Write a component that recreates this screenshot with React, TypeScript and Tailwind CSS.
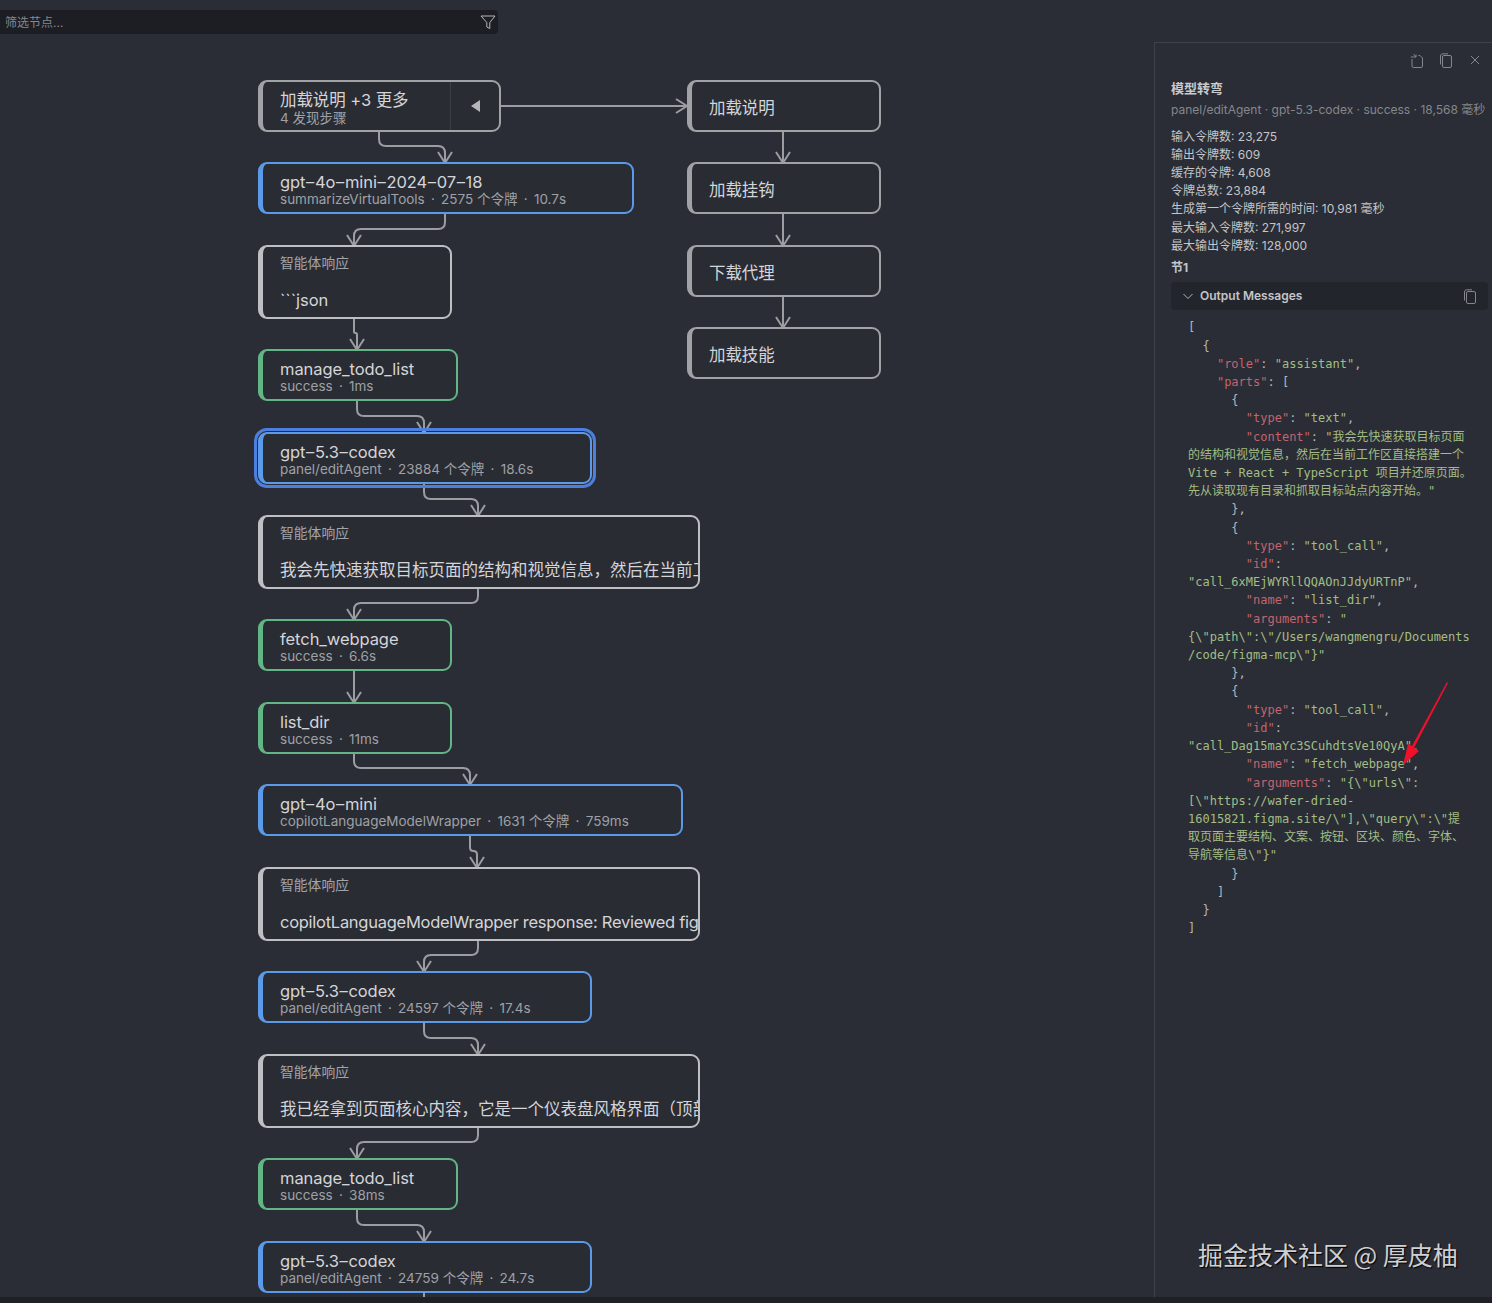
import React from "react";

const SANS = "font-['Inter','Noto_Sans_CJK_SC',sans-serif]";
const SEP = " \u2009·\u2009 ";

type Kind = "gray" | "blue" | "green" | "resp" | "active";
type N = { x: number; y: number; w: number; h: number; kind: Kind; title: string; sub?: string; head?: string; collapse?: boolean; tight?: boolean };

const nodes: N[] = [
  { x: 258, y: 81, w: 242, h: 50, kind: "gray", title: "加载说明 +3 更多", sub: "4 发现步骤", collapse: true },
  { x: 258, y: 163, w: 375, h: 51, kind: "blue", title: "gpt–4o–mini–2024–07–18", sub: `summarizeVirtualTools${SEP}2575 个令牌${SEP}10.7s` },
  { x: 258, y: 246, w: 193, h: 72, kind: "resp", head: "智能体响应", title: "```json" },
  { x: 258, y: 350, w: 199, h: 51, kind: "green", title: "manage_todo_list", sub: `success${SEP}1ms` },
  { x: 258, y: 433, w: 333, h: 51, kind: "active", title: "gpt–5.3–codex", sub: `panel/editAgent${SEP}23884 个令牌${SEP}18.6s` },
  { x: 258, y: 516, w: 441, h: 72, kind: "resp", head: "智能体响应", title: "我会先快速获取目标页面的结构和视觉信息，然后在当前工作区直接搭建一个" },
  { x: 258, y: 620, w: 193, h: 50, kind: "green", title: "fetch_webpage", sub: `success${SEP}6.6s` },
  { x: 258, y: 703, w: 193, h: 50, kind: "green", title: "list_dir", sub: `success${SEP}11ms` },
  { x: 258, y: 785, w: 424, h: 51, kind: "blue", title: "gpt–4o–mini", sub: `copilotLanguageModelWrapper${SEP}1631 个令牌${SEP}759ms` },
  { x: 258, y: 868, w: 441, h: 72, kind: "resp", head: "智能体响应", title: "copilotLanguageModelWrapper response: Reviewed figma", tight: true },
  { x: 258, y: 972, w: 333, h: 51, kind: "blue", title: "gpt–5.3–codex", sub: `panel/editAgent${SEP}24597 个令牌${SEP}17.4s` },
  { x: 258, y: 1055, w: 441, h: 72, kind: "resp", head: "智能体响应", title: "我已经拿到页面核心内容，它是一个仪表盘风格界面（顶部导航" },
  { x: 258, y: 1159, w: 199, h: 51, kind: "green", title: "manage_todo_list", sub: `success${SEP}38ms` },
  { x: 258, y: 1242, w: 333, h: 51, kind: "blue", title: "gpt–5.3–codex", sub: `panel/editAgent${SEP}24759 个令牌${SEP}24.7s` },
  { x: 687, y: 81, w: 193, h: 50, kind: "gray", title: "加载说明" },
  { x: 687, y: 163, w: 193, h: 51, kind: "gray", title: "加载挂钩" },
  { x: 687, y: 246, w: 193, h: 50, kind: "gray", title: "下载代理" },
  { x: 687, y: 328, w: 193, h: 51, kind: "gray", title: "加载技能" },
];

const kindClass: Record<Kind, string> = {
  gray: "border-[#a0a2a6]",
  blue: "border-[#5b9ae8]",
  green: "border-[#62b585]",
  resp: "border-[#bdbfc3]",
  active: "border-[#5b9ae8] outline-[3px] outline-offset-1 outline-[#4c7fe0]",
};

function edgePath(x1: number, y1: number, x2: number, y2: number) {
  if (x1 === x2) return `M${x1} ${y1}V${y2}`;
  const d = x2 > x1 ? 1 : -1;
  const r = Math.min(7, Math.abs(x2 - x1) / 2);
  const m = y1 + 15;
  return `M${x1} ${y1}V${m - r}Q${x1} ${m} ${x1 + d * r} ${m}H${x2 - d * r}Q${x2} ${m} ${x2} ${m + r}V${y2}`;
}

const edges: [number, number, number, number][] = [
  [379, 131, 445, 163],
  [445, 214, 354, 246],
  [354, 318, 357, 350],
  [357, 401, 424, 433],
  [424, 484, 478, 516],
  [478, 588, 354, 620],
  [354, 670, 354, 703],
  [354, 753, 470, 785],
  [470, 836, 477, 868],
  [478, 940, 424, 972],
  [424, 1023, 478, 1055],
  [478, 1127, 357, 1159],
  [357, 1210, 424, 1242],
  [783, 131, 783, 163],
  [783, 214, 783, 246],
  [783, 296, 783, 328],
];

function Edges() {
  return (
    <svg className="absolute left-0 top-0 pointer-events-none" width="1150" height="1297" fill="none" stroke="#9b9da1" strokeWidth="2">
      {edges.map(([a, b, c, d], i) => (
        <g key={i}>
          <path d={edgePath(a, b, c, d)} />
          <path d={`M${c - 7} ${d - 11}L${c} ${d}L${c + 7} ${d - 11}`} />
        </g>
      ))}
      <path d="M500 106H687M676 99L687 106L676 113" />
      <path d="M424 1293V1297" />
    </svg>
  );
}

function Title({ text }: { text: string }) {
  const parts = text.split("–");
  return (
    <>
      {parts.map((p, i) => (
        <React.Fragment key={i}>
          {i > 0 && <span className="px-[0.7px]">–</span>}
          {p}
        </React.Fragment>
      ))}
    </>
  );
}

function Node({ n }: { n: N }) {
  return (
    <div
      className={`absolute box-border rounded-[9px] border-2 border-l-[5px] bg-[#2a2c34] ${kindClass[n.kind]} ${SANS}`}
      style={{ left: n.x, top: n.y - 1, width: n.w + 1, height: n.h === 51 ? 52 : n.h + 2 }}
    >
      <div className="flex h-full overflow-hidden rounded-md">
        {n.head ? (
          <div className="pl-[17px] pt-[7px] whitespace-nowrap overflow-hidden">
            <div className="text-[13.8px] leading-[18px] text-[#a2a4a8]">{n.head}</div>
            <div className={`mt-[17px] text-[16.5px] leading-[22px] text-[#d4d5d8] ${n.tight ? "tracking-[-0.27px]" : ""}`}>{n.title}</div>
          </div>
        ) : (
          <div className={`flex-1 pl-[17px] flex flex-col justify-center whitespace-pre ${n.sub ? "pt-[4px]" : "pt-[3px]"}`}>
            <div className="text-[16.5px] leading-[18px] tracking-[-0.07px] text-[#d4d5d8]"><Title text={n.title} /></div>
            {n.sub && <div className={`text-[13.5px] leading-[16px] text-[#9fa1a5] ${n.collapse ? "mt-[1px]" : ""}`}>{n.sub}</div>}
          </div>
        )}
        {n.collapse && (
          <div className="w-[49px] border-l border-[#3c3e46] flex items-center justify-center">
            <div className="w-0 h-0 border-y-[6px] border-y-transparent border-r-[9px] border-r-[#b4b6ba]" />
          </div>
        )}
      </div>
    </div>
  );
}

const K = ({ children }: { children: React.ReactNode }) => <span className="text-[#c3646f]">{children}</span>;
const S = ({ children }: { children: React.ReactNode }) => <span className="text-[#a3bd85]">{children}</span>;

function Json() {
  return (
    <pre className="mt-[8px] ml-[17px] font-['DejaVu_Sans_Mono','Noto_Sans_CJK_SC',monospace] text-[12px] leading-[18.2px] text-[#b4b6ba]">
      {"[\n  {\n    "}<K>"role"</K>{": "}<S>"assistant"</S>{",\n    "}<K>"parts"</K>{": [\n      {\n        "}
      <K>"type"</K>{": "}<S>"text"</S>{",\n        "}<K>"content"</K>{": "}
      <S>{'"我会先快速获取目标页面\n的结构和视觉信息，然后在当前工作区直接搭建一个\nVite + React + TypeScript 项目并还原页面。\n先从读取现有目录和抓取目标站点内容开始。"'}</S>
      {"\n      },\n      {\n        "}
      <K>"type"</K>{": "}<S>"tool_call"</S>{",\n        "}<K>"id"</K>{":\n"}<S>"call_6xMEjWYRllQQAOnJJdyURTnP"</S>{",\n        "}
      <K>"name"</K>{": "}<S>"list_dir"</S>{",\n        "}<K>"arguments"</K>{": "}
      <S>{'"\n{\\"path\\":\\"/Users/wangmengru/Documents\n/code/figma-mcp\\"}"'}</S>
      {"\n      },\n      {\n        "}
      <K>"type"</K>{": "}<S>"tool_call"</S>{",\n        "}<K>"id"</K>{":\n"}<S>"call_Dag15maYc3SCuhdtsVe10QyA"</S>{",\n        "}
      <K>"name"</K>{": "}<S>"fetch_webpage"</S>{",\n        "}<K>"arguments"</K>{": "}
      <S>{'"{\\"urls\\":\n[\\"https://wafer-dried-\n16015821.figma.site/\\"],\\"query\\":\\"提\n取页面主要结构、文案、按钮、区块、颜色、字体、\n导航等信息\\"}"'}</S>
      {"\n      }\n    ]\n  }\n]"}
    </pre>
  );
}

const CopyIcon = () => (
  <svg width="14" height="15" viewBox="0 0 14 15" fill="none" stroke="#85878c" strokeWidth="1">
    <rect x="3.5" y="2.5" width="9" height="12" rx="1.5" />
    <path d="M1.5 11.5V3Q1.5 1 3.5 .8H9" />
  </svg>
);

const stats = [
  "输入令牌数: 23,275",
  "输出令牌数: 609",
  "缓存的令牌: 4,608",
  "令牌总数: 23,884",
  "生成第一个令牌所需的时间: 10,981 毫秒",
  "最大输入令牌数: 271,997",
  "最大输出令牌数: 128,000",
];

export default function App() {
  return (
    <div className={`relative w-[1492px] h-[1303px] overflow-hidden bg-[#2a2d35] ${SANS}`}>
      <div className="flex h-[1297px]">
        <main className="relative flex-1">
          <div className="flex h-6 w-[498px] mt-[10px] items-center justify-between rounded-r bg-[#1c1e24] pl-[5px] pr-[1px]">
            <span className="mt-[2px] text-[12px] text-[#85878c]">筛选节点...</span>
            <svg width="16" height="16" viewBox="0 0 16 16" fill="none" stroke="#b4b6ba" strokeWidth="1" className="mr-[1px]">
              <path d="M1 2H15L9.8 8.5V14.5L6.8 13V8.5Z" strokeLinejoin="round" />
            </svg>
          </div>
          <Edges />
          {nodes.map((n, i) => (
            <Node key={i} n={n} />
          ))}
        </main>
        <aside className="mt-[42px] box-border w-[338px] shrink-0 border-l border-t border-[#3e4149] pl-4 pr-[4px]">
          <div className="flex h-[37px] items-center justify-end gap-[15px] pr-[6px] pb-[3px]">
            <svg width="14" height="15" viewBox="0 0 14 15" fill="none" stroke="#85878c" strokeWidth="1">
              <path d="M2 6V13Q2 14.5 3.5 14.5H11Q12.5 14.5 12.5 13V5L10 2.5H8.5" />
              <path d="M.8 4H6M6 4V1.5M6 4L3.5 1.2" />
            </svg>
            <CopyIcon />
            <svg width="14" height="14" viewBox="0 0 14 14" fill="none" stroke="#85878c" strokeWidth="1">
              <path d="M3 3L11 11M11 3L3 11" />
            </svg>
          </div>
          <div className="-mt-[1px] text-[13px] leading-[18px] font-bold text-[#c9cacd]">模型转弯</div>
          <div className="mt-[4px] whitespace-nowrap text-[12px] leading-[18px] text-[#85878c]">
            panel/editAgent · gpt-5.3-codex · success · 18,568 毫秒
          </div>
          <div className="mt-[8.5px] text-[12px] leading-[18.2px] text-[#c4c5c8]">
            {stats.map((s) => (
              <div key={s}>{s}</div>
            ))}
          </div>
          <div className="mt-[4.5px] text-[12px] leading-[18px] font-bold text-[#c4c5c8]">节1</div>
          <div className="mt-[5px] flex h-[28px] items-center justify-between rounded bg-[#23252c] pl-[11px] pr-[11px]">
            <div className="flex items-center gap-[6px]">
              <svg width="12" height="12" viewBox="0 0 12 12" fill="none" stroke="#b4b6ba" strokeWidth="1">
                <path d="M1.5 4L6 8.5L10.5 4" />
              </svg>
              <span className="text-[12px] font-semibold text-[#c4c5c8]">Output Messages</span>
            </div>
            <CopyIcon />
          </div>
          <Json />
        </aside>
      </div>
      <div className="h-[6px] bg-[#1f2127]" />

      <svg className="absolute left-[1395px] top-[675px]" width="60" height="100" viewBox="0 0 60 100" fill="#f0102a">
        <path d="M52 7L53 8L19 73L24 76L8 90L13 69L17 71Z" />
      </svg>
      <div className="absolute left-[1198px] top-[1236px] whitespace-nowrap text-[25px] leading-[36px] text-[#cfd0d3] [text-shadow:1px_1px_1px_#000] font-['Noto_Sans_CJK_SC','Inter',sans-serif]">
        掘金技术社区 @ 厚皮柚
      </div>
    </div>
  );
}
